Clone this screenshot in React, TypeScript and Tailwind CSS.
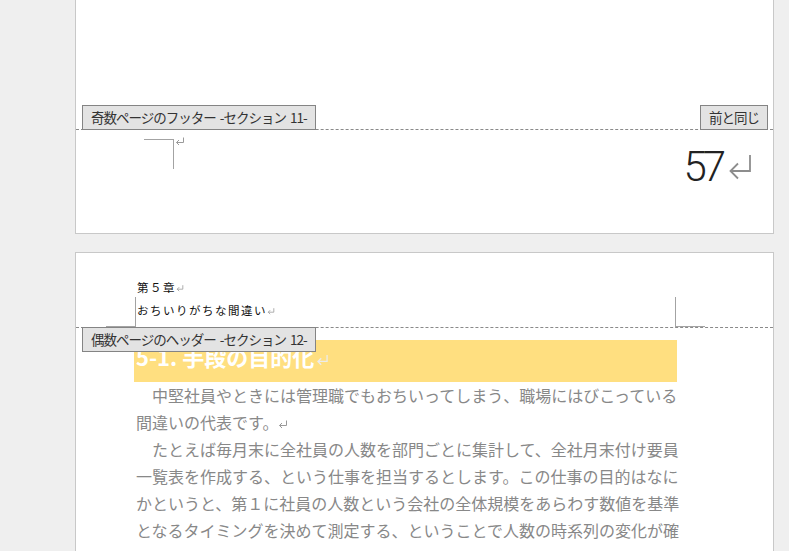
function ReturnMark({ className, color = "#9a9a9a" }: { className?: string; color?: string }) {
  return (
    <svg viewBox="0 0 10 10" className={className} fill="none" stroke={color} strokeWidth="1">
      <path d="M8.5 1.5 V6.5 H1.5 M4 4 L1.5 6.5 L4 9" />
    </svg>
  );
}

function SectionLabel({ children }: { children: React.ReactNode }) {
  return (
    <span className="block h-[25px] whitespace-nowrap border border-[#848484] bg-[#e3e3e3] px-[8px] text-[13.5px] leading-[23px] tracking-[-1px] text-[#333] [word-spacing:2px]">
      {children}
    </span>
  );
}

export default function App() {
  return (
    <div className="h-[551px] w-[789px] overflow-hidden bg-[#efefef] font-['Noto_Sans_CJK_JP',sans-serif]">
      <div className="ml-[75px] w-[699px]">
        {/* end of page 57 */}
        <div className="h-[234px] border-x border-b border-[#c8c8c8] bg-white">
          <div className="h-[129px]" />
          <div className="relative border-t border-dashed border-[#8a8a8a]">
            <div className="absolute left-[6px] top-[-25px]">
              <SectionLabel>奇数ページのフッター -セクション 11-</SectionLabel>
            </div>
            <div className="absolute right-[5px] top-[-25px]">
              <SectionLabel>前と同じ</SectionLabel>
            </div>
          </div>
          <div className="flex items-start">
            <div className="ml-[68px] mt-[9px] h-[30px] w-[30px] border-r border-t border-[#a3a3a3]" />
            <ReturnMark className="mt-[6px] ml-[1px] h-[10px] w-[10px]" />
            <div className="ml-auto mr-[21px] mt-[16px] flex items-start">
              <span className="font-['Roboto',sans-serif] text-[42px] font-light leading-[42px] tracking-[-4px] text-[#222]">
                57
              </span>
              <svg viewBox="0 0 24 28" className="ml-[6px] mt-[7px] h-[28px] w-[24px]" fill="none" stroke="#8d8d8d" strokeWidth="1.8">
                <path d="M22 2 V18 H2.5 M10 10.5 L2.5 18 L10 25.5" />
              </svg>
            </div>
          </div>
        </div>

        {/* page 58 */}
        <div className="mt-[18px] h-[400px] border border-[#c8c8c8] bg-white">
          <div className="flex h-[74px] items-end">
            <div className="ml-[30px] h-[30px] w-[30px] border-b border-r border-[#a3a3a3]" />
            <div className="ml-[1px] pb-[5px] text-[11.5px] leading-[23px] tracking-[1.5px] text-[#111]">
              <div className="flex items-center">
                第５章<ReturnMark className="h-[8px] w-[8px]" />
              </div>
              <div className="flex items-center">
                おちいりがちな間違い<ReturnMark className="h-[8px] w-[8px]" />
              </div>
            </div>
            <div className="ml-auto mr-[68px] h-[30px] w-[30px] border-b border-l border-[#a3a3a3]" />
          </div>
          <div className="relative border-t border-dashed border-[#8a8a8a]">
            <div className="absolute left-[6px] top-[-1px] z-10">
              <SectionLabel>偶数ページのヘッダー -セクション 12-</SectionLabel>
            </div>
            <div className="pt-[12px]">
              <div className="ml-[58px] flex h-[42px] w-[543px] items-start bg-[#ffdf80] pl-[2px]">
                <span className="text-[22px] font-bold leading-[32px] text-white">5-1. 手段の目的化</span>
                <ReturnMark className="ml-[2px] mt-[13px] h-[13px] w-[13px]" color="#ececec" />
              </div>
              <div className="ml-[60px] w-[545px] text-[16px] leading-[27px] text-[#888]">
                <p className="indent-[16px]">
                  中堅社員やときには管理職でもおちいってしまう、職場にはびこっている間違いの代表です。
                  <ReturnMark className="inline-block h-[10px] w-[10px] align-baseline" />
                </p>
                <p className="indent-[16px]">
                  たとえば毎月末に全社員の人数を部門ごとに集計して、全社月末付け要員一覧表を作成する、という仕事を担当するとします。この仕事の目的はなにかというと、第１に社員の人数という会社の全体規模をあらわす数値を基準となるタイミングを決めて測定する、ということで人数の時系列の変化が確認できることです。
                </p>
              </div>
            </div>
          </div>
        </div>
      </div>
    </div>
  );
}
